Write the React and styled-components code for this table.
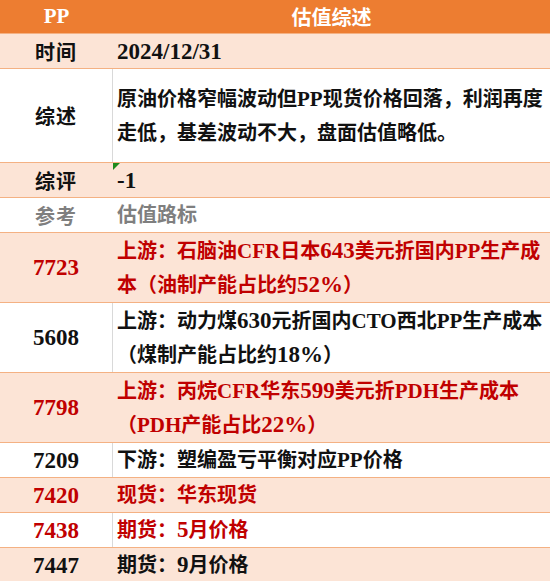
import React from "react";
import styled, { createGlobalStyle } from "styled-components";

const GlobalStyle = createGlobalStyle`
  html, body {
    margin: 0;
    padding: 0;
    background: #ffffff;
  }
  body {
    font-family: "Liberation Serif", "Noto Sans CJK SC", serif;
  }
`;

const Table = styled.div`
  width: 550px;
  display: flex;
  flex-direction: column;
`;

const Row = styled.div`
  display: grid;
  grid-template-columns: 113px 1fr;
  height: ${(p) => p.$h || 34}px;
  background: ${(p) => (p.$fill ? "#fce4d6" : "#ffffff")};
  border-bottom: 1px solid #f4b183;
`;

const HeadRow = styled(Row)`
  background: #ed7d31;
  color: #ffffff;
  height: 33px;
`;

const HeadCell = styled.div`
  display: flex;
  align-items: center;
  justify-content: center;
  font-size: 20px;
  font-weight: 700;
`;

const KeyCell = styled.div`
  display: flex;
  align-items: center;
  justify-content: center;
  font-size: 20px;
  font-weight: 700;
  letter-spacing: 1px;
  color: ${(p) => p.$color || "#111111"};
  border-right: 1px solid ${(p) => (p.$line ? "#d9d9d9" : "transparent")};
`;

const ValueCell = styled.div`
  position: relative;
  display: flex;
  align-items: center;
  padding-left: 4px;
  font-size: 20px;
  font-weight: 700;
  line-height: 34px;
  white-space: nowrap;
  color: ${(p) => p.$color || "#111111"};
`;

// latin runs: the sheet's digits come out wider than the letters
const Latin = styled.span`
  font-size: ${(p) => (p.$digits ? 23 : 21)}px;
  line-height: 1;
  letter-spacing: 0;
`;

const Note = styled.span`
  position: absolute;
  top: 0;
  left: 0;
  width: 0;
  height: 0;
  border-top: 7px solid #1e8b1e;
  border-right: 7px solid transparent;
`;

const RED = "#c00000";
const GRAY = "#7f7f7f";

const mark = (s) =>
  s.split(/([0-9/%\-]+|[A-Za-z]+)/).map((part, i) => {
    if (i % 2 === 0) return part;
    return (
      <Latin key={i} $digits={/[0-9/%\-]/.test(part)}>
        {part}
      </Latin>
    );
  });

const Lines = ({ text }) =>
  text.map((t, i) => (
    <React.Fragment key={i}>
      {i > 0 && <br />}
      {mark(t)}
    </React.Fragment>
  ));

const rows = [
  { key: "7723", color: RED, fill: true, h: 69, text: ["上游：石脑油CFR日本643美元折国内PP生产成", "本（油制产能占比约52%）"] },
  { key: "5608", fill: false, h: 69, text: ["上游：动力煤630元折国内CTO西北PP生产成本", "（煤制产能占比约18%）"] },
  { key: "7798", color: RED, fill: true, h: 69, text: ["上游：丙烷CFR华东599美元折PDH生产成本", "（PDH产能占比22%）"] },
  { key: "7209", fill: false, text: ["下游：塑编盈亏平衡对应PP价格"] },
  { key: "7420", color: RED, fill: true, text: ["现货：华东现货"] },
  { key: "7438", color: RED, fill: false, text: ["期货：5月价格"] },
  { key: "7447", fill: true, text: ["期货：9月价格"] },
];

const App = () => {
  return (
    <>
      <GlobalStyle />
      <Table>
        <HeadRow>
          <HeadCell>{mark("PP")}</HeadCell>
          <HeadCell>估值综述</HeadCell>
        </HeadRow>

        <Row $fill>
          <KeyCell>时间</KeyCell>
          <ValueCell>{mark("2024/12/31")}</ValueCell>
        </Row>

        <Row $h={93}>
          <KeyCell $line>综述</KeyCell>
          <ValueCell>
            <div>
              <Lines
                text={[
                  "原油价格窄幅波动但PP现货价格回落，利润再度",
                  "走低，基差波动不大，盘面估值略低。",
                ]}
              />
            </div>
          </ValueCell>
        </Row>

        <Row $fill>
          <KeyCell>综评</KeyCell>
          <ValueCell>
            <Note />
            {mark("-1")}
          </ValueCell>
        </Row>

        <Row>
          <KeyCell $color={GRAY}>参考</KeyCell>
          <ValueCell $color={GRAY}>估值路标</ValueCell>
        </Row>

        {rows.map((r) => (
          <Row key={r.key} $fill={r.fill} $h={r.h}>
            <KeyCell $color={r.color} $line={!r.fill}>
              {mark(r.key)}
            </KeyCell>
            <ValueCell $color={r.color}>
              <div>
                <Lines text={r.text} />
              </div>
            </ValueCell>
          </Row>
        ))}
      </Table>
    </>
  );
};

export default App;
